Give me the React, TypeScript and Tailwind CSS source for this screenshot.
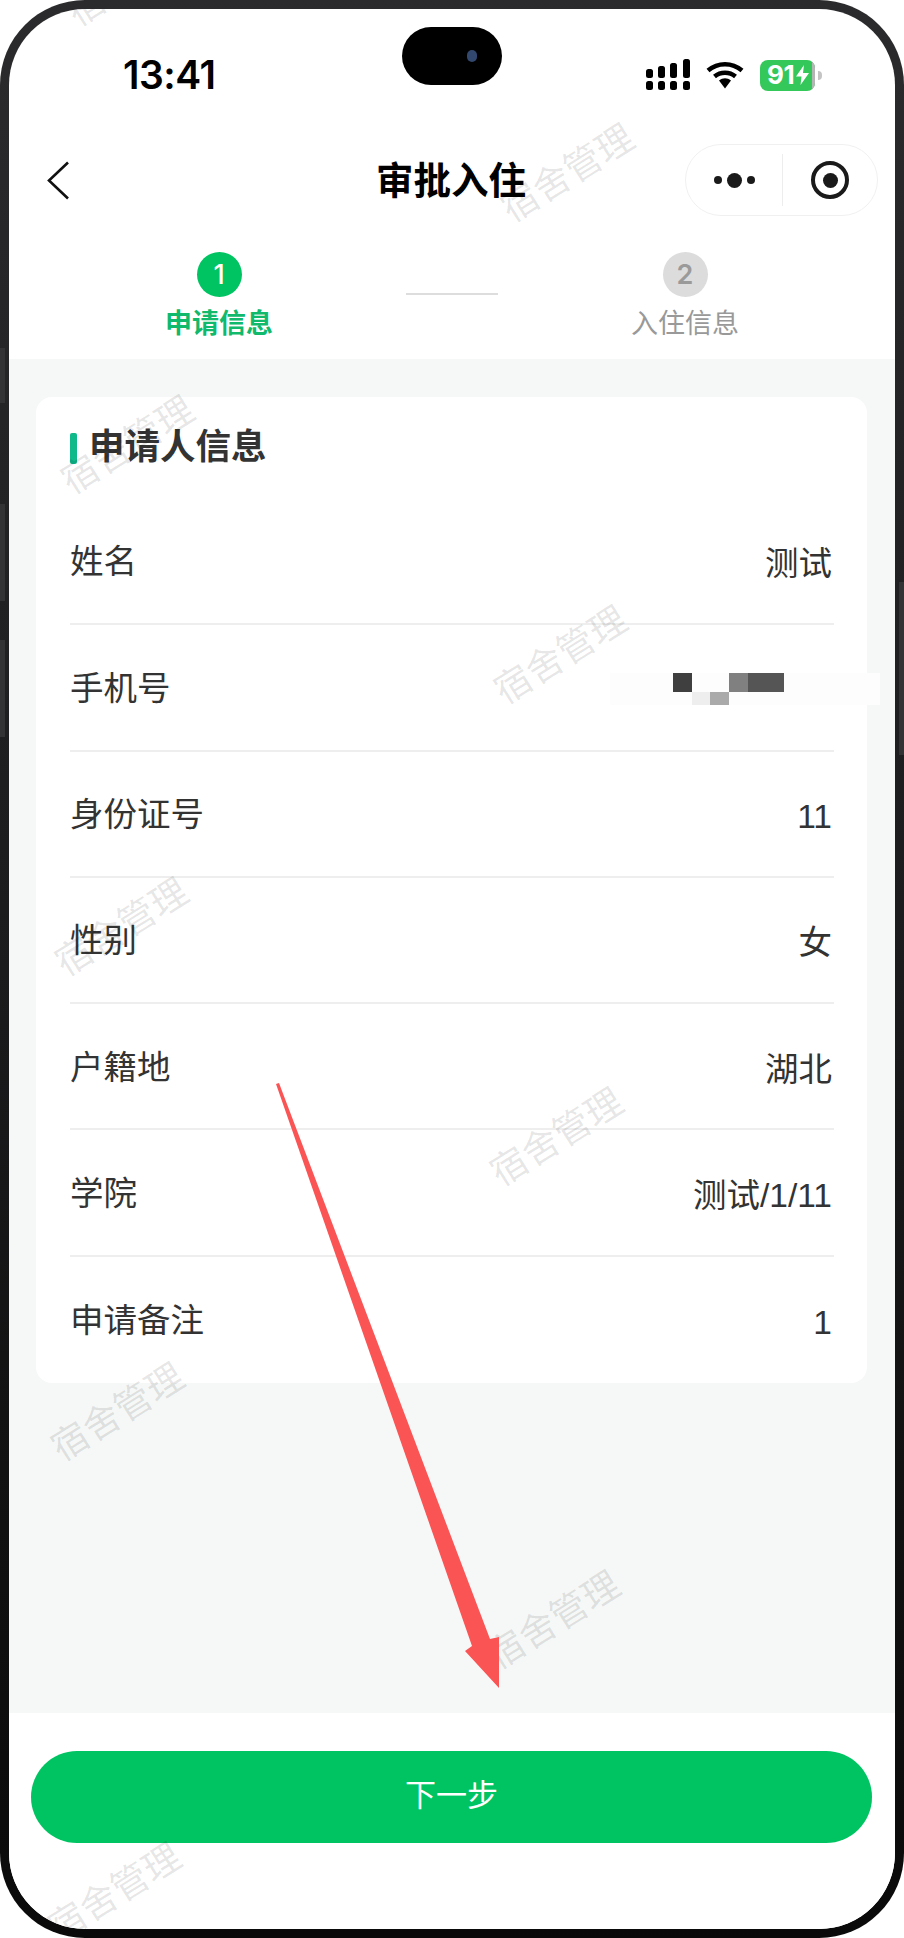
import React from "react";

const font = "font-['Liberation_Sans','Noto_Sans_CJK_SC',sans-serif]";

const rows = [
  { label: "姓名", value: "测试" },
  { label: "手机号", value: "" },
  { label: "身份证号", value: "11" },
  { label: "性别", value: "女" },
  { label: "户籍地", value: "湖北" },
  { label: "学院", value: "测试/1/11" },
  { label: "申请备注", value: "1" },
];

const marks = [
  "left-[51px] top-[-55px]",
  "left-[485px] top-[141px]",
  "left-[45px] top-[413px]",
  "left-[478px] top-[623px]",
  "left-[39px] top-[895px]",
  "left-[474px] top-[1105px]",
  "left-[35px] top-[1380px]",
  "left-[471px] top-[1588px]",
  "left-[32px] top-[1860px]",
];

function Signal() {
  return (
    <svg width="44" height="32" viewBox="0 0 44 32" fill="#000">
      <rect x="0" y="22" width="7" height="9" rx="2.5" />
      <rect x="12" y="22" width="7" height="9" rx="2.5" />
      <rect x="24" y="22" width="7" height="9" rx="2.5" />
      <rect x="37" y="22" width="7" height="9" rx="2.5" />
      <rect x="0" y="10" width="7" height="9" rx="2.5" />
      <rect x="12" y="7" width="7" height="12" rx="2.5" />
      <rect x="24" y="4" width="7" height="15" rx="2.5" />
      <rect x="37" y="0" width="7" height="19" rx="2.5" />
    </svg>
  );
}

function Wifi() {
  return (
    <svg width="38" height="28" viewBox="0 0 38 28" fill="none" stroke="#000" strokeWidth="4.5">
      <path d="M2 9.5C12 1 26 1 36 9.5" />
      <path d="M8.5 15.5C14.5 10.5 23.5 10.5 29.5 15.5" />
      <path d="M13 19.5L19 27.5L25 19.5C21 16.5 17 16.5 13 19.5Z" fill="#000" stroke="none" />
    </svg>
  );
}

function Battery() {
  return (
    <div className="flex items-center gap-[3px]">
      <div className="flex h-[31px] w-[55px] items-center overflow-hidden rounded-[8px] bg-[#34c759]">
        <span className="ml-[7px] font-['Inter',sans-serif] text-[26px] leading-none font-bold tracking-[-0.5px] text-white">91</span>
        <svg className="ml-[2px]" width="13" height="20" viewBox="0 0 13 20" fill="#fff">
          <path d="M8 0L0 11.5H5.5L4.5 20L13 8H7Z" />
        </svg>
        <div className="ml-auto h-full w-[3px] bg-[#b5b5b5]" />
      </div>
      <div className="h-[9px] w-[4px] rounded-r-full bg-[#c4c4c4]" />
    </div>
  );
}

function Pixelated() {
  return (
    <div className="flex w-[270px] translate-x-[48px] translate-y-[2px] flex-col bg-[#fdfdfd] pl-[26px]">
      <div className="flex h-[19px]">
        <div className="w-[37px]" />
        <div className="w-[19px] bg-[#3f3f3f]" />
        <div className="w-[37px]" />
        <div className="w-[19px] bg-[#808080]" />
        <div className="w-[36px] bg-[#555555]" />
      </div>
      <div className="flex h-[13px]">
        <div className="w-[56px]" />
        <div className="w-[18px] bg-[#eeeeee]" />
        <div className="w-[19px] bg-[#aaaaaa]" />
      </div>
    </div>
  );
}

export default function App() {
  return (
    <div className={`relative h-[1938px] w-[904px] rounded-[85px] bg-gradient-to-b from-[#2b2b2d] via-[#1b1b1d] to-[#0a0a0a] p-[9px] ${font}`}>
      <div className="absolute top-[348px] left-0 h-[55px] w-[5px] bg-[#333335]" />
      <div className="absolute top-[504px] left-0 h-[97px] w-[5px] bg-[#333335]" />
      <div className="absolute top-[640px] left-0 h-[97px] w-[5px] bg-[#333335]" />
      <div className="absolute top-[582px] right-0 h-[173px] w-[5px] bg-[#333335]" />

      <div className="relative flex h-full flex-col overflow-hidden rounded-[76px] bg-white">
        {/* Status bar */}
        <div className="relative flex h-[132px] shrink-0 items-center justify-between pr-[73px] pl-[114px]">
          <span className="-translate-y-[1px] font-['Inter',sans-serif] text-[39px] leading-none font-semibold tracking-[-0.5px] text-black">13:41</span>
          <div className="absolute top-[18px] left-[393px] flex h-[58px] w-[100px] items-center justify-end rounded-full bg-black pr-[25px]">
            <div className="h-[12px] w-[10px] rounded-full bg-[#33486e]" />
          </div>
          <div className="flex items-center gap-[16px]">
            <Signal />
            <Wifi />
            <Battery />
          </div>
        </div>

        {/* Navigation */}
        <div className="grid h-[78px] shrink-0 grid-cols-[1fr_auto_1fr] items-center">
          <div className="pl-[38px]">
            <svg width="23" height="39" viewBox="0 0 23 39" fill="none" stroke="#111" strokeWidth="2.6">
              <path d="M21 1.5L2 19.5L21 37.5" />
            </svg>
          </div>
          <div className="-translate-x-[1px] translate-y-[2px] text-[37.5px] leading-none font-bold text-black">审批入住</div>
          <div className="flex justify-end pr-[17px]">
            <div className="flex h-[72px] w-[193px] items-center rounded-full border border-[#f0f0f0]">
              <div className="flex w-[96px] items-center justify-center gap-[5px] pl-[1px]">
                <div className="h-[8px] w-[8px] rounded-full bg-[#1a1a1a]" />
                <div className="h-[15px] w-[15px] rounded-full bg-[#1a1a1a]" />
                <div className="h-[8px] w-[8px] rounded-full bg-[#1a1a1a]" />
              </div>
              <div className="h-[52px] w-px bg-[#ededed]" />
              <div className="flex flex-1 items-center justify-center">
                <div className="flex h-[38px] w-[38px] items-center justify-center rounded-full border-[4px] border-[#1a1a1a]">
                  <div className="h-[15px] w-[15px] rounded-full bg-[#1a1a1a]" />
                </div>
              </div>
            </div>
          </div>
        </div>

        {/* Steps */}
        <div className="flex h-[140px] shrink-0 justify-center gap-[134px] pt-[33px]">
          <div className="flex w-[106px] flex-col items-center">
            <div className="flex h-[45px] w-[45px] items-center justify-center rounded-full bg-[#00c462] font-['Inter',sans-serif] text-[27px] leading-none font-medium text-white">1</div>
            <div className="mt-[9px] text-[27px] leading-[36px] font-bold whitespace-nowrap text-[#10b96c]">申请信息</div>
          </div>
          <div className="mt-[41px] h-[2px] w-[92px] bg-[#dddddd]" />
          <div className="flex w-[106px] flex-col items-center">
            <div className="flex h-[45px] w-[45px] items-center justify-center rounded-full bg-[#dcdcdc] font-['Inter',sans-serif] text-[27px] leading-none font-semibold text-[#9a9a9a]">2</div>
            <div className="mt-[9px] text-[27px] leading-[36px] whitespace-nowrap text-[#999999]">入住信息</div>
          </div>
        </div>

        {/* Content */}
        <div className="flex-1 bg-[#f6f8f7] pt-[38px] pr-[28px] pl-[27px]">
          <div className="rounded-[16px] bg-white pr-[33px] pl-[34px]">
            <div className="flex h-[102px] items-center gap-[12px]">
              <div className="h-[31px] w-[7px] rounded-[2px] bg-[#10b98a]" />
              <div className="text-[35.5px] leading-none font-bold text-[#333333]">申请人信息</div>
            </div>
            {rows.map((row, i) => (
              <div
                key={row.label}
                className={`flex h-[126.3px] items-center justify-between pr-[2px] ${i < rows.length - 1 ? "border-b-2 border-[#eeeeee]" : ""}`}
              >
                <span className="translate-y-[1px] text-[33.5px] leading-none text-[#333333]">{row.label}</span>
                {row.value ? (
                  <span className="translate-y-[3px] text-[33.5px] leading-none text-[#333333]">{row.value}</span>
                ) : (
                  <Pixelated />
                )}
              </div>
            ))}
          </div>
        </div>

        {/* Footer */}
        <div className="h-[216px] shrink-0 bg-white pt-[38px] pr-[23px] pl-[22px]">
          <div className="flex h-[92px] items-center justify-center rounded-full bg-[#00c462] pb-[3px] text-[31px] leading-none text-white">下一步</div>
        </div>

        {/* Watermarks */}
        {marks.map((pos) => (
          <div
            key={pos}
            className={`pointer-events-none absolute w-[148px] -rotate-[32deg] text-center text-[37px] leading-[48px] whitespace-nowrap text-black/10 ${pos}`}
          >
            宿舍管理
          </div>
        ))}
      </div>

      {/* Annotation arrow */}
      <svg className="pointer-events-none absolute top-0 left-0" width="904" height="1938" viewBox="0 0 904 1938">
        <path d="M276 1084L279 1083L490 1639L499 1637L499 1688L465 1651L472 1646Z" fill="#fb5455" />
      </svg>
    </div>
  );
}
